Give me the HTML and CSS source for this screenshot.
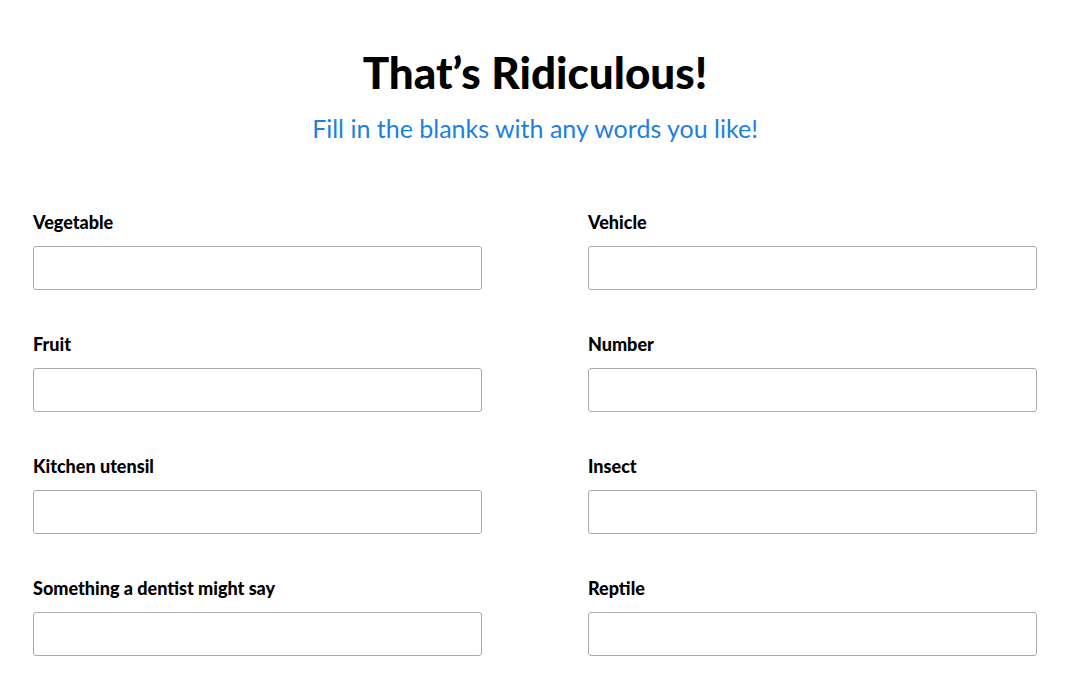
FILE: index.html
```html
<!DOCTYPE html>
<html lang="en">
<head>
  <meta charset="UTF-8">
  <meta name="viewport" content="width=device-width, initial-scale=1.0">
  <title>That's Ridiculous!</title>
  <link rel="stylesheet" href="styles.css">
</head>
<body>
  <div class="page">
    <h1>That’s Ridiculous!</h1>
    <p class="intro">Fill in the blanks with any words you like!</p>

    <form class="blanks">
      <div class="field">
        <label for="vegetable">Vegetable</label>
        <input type="text" id="vegetable">
      </div>
      <div class="field">
        <label for="vehicle">Vehicle</label>
        <input type="text" id="vehicle">
      </div>
      <div class="field">
        <label for="fruit">Fruit</label>
        <input type="text" id="fruit">
      </div>
      <div class="field">
        <label for="number">Number</label>
        <input type="text" id="number">
      </div>
      <div class="field">
        <label for="utensil">Kitchen utensil</label>
        <input type="text" id="utensil">
      </div>
      <div class="field">
        <label for="insect">Insect</label>
        <input type="text" id="insect">
      </div>
      <div class="field">
        <label for="dentist">Something a dentist might say</label>
        <input type="text" id="dentist">
      </div>
      <div class="field">
        <label for="reptile">Reptile</label>
        <input type="text" id="reptile">
      </div>
    </form>
  </div>
</body>
</html>
```

FILE: styles.css
```css
body {
  margin: 0;
  font-family: Lato, "Noto Sans", sans-serif;
  background-color: white;
  color: #000;
}
.page {
  width: 1004px;
  margin-left: 33px;
  padding-top: 46px;
}
h1 {
  margin: 0;
  text-align: center;
  font-size: 44px;
  font-weight: 900;
  line-height: 52px;
}
.intro {
  margin: 16px 0 0;
  text-align: center;
  font-size: 25px;
  line-height: 28px;
  color: #1b7fe3;
}
.blanks {
  margin-top: 70px;
  display: grid;
  grid-template-columns: 449px 449px;
  column-gap: 106px;
  row-gap: 44px;
}
.field label {
  display: block;
  font-size: 18px;
  font-weight: 900;
  line-height: 20px;
  margin-bottom: 14px;
}
.field input {
  display: block;
  box-sizing: border-box;
  width: 449px;
  height: 44px;
  margin: 0;
  border: 1px solid #aaa;
  border-radius: 3px;
  background: white;
  font-family: inherit;
  font-size: 16px;
  padding: 0 10px;
}
```
